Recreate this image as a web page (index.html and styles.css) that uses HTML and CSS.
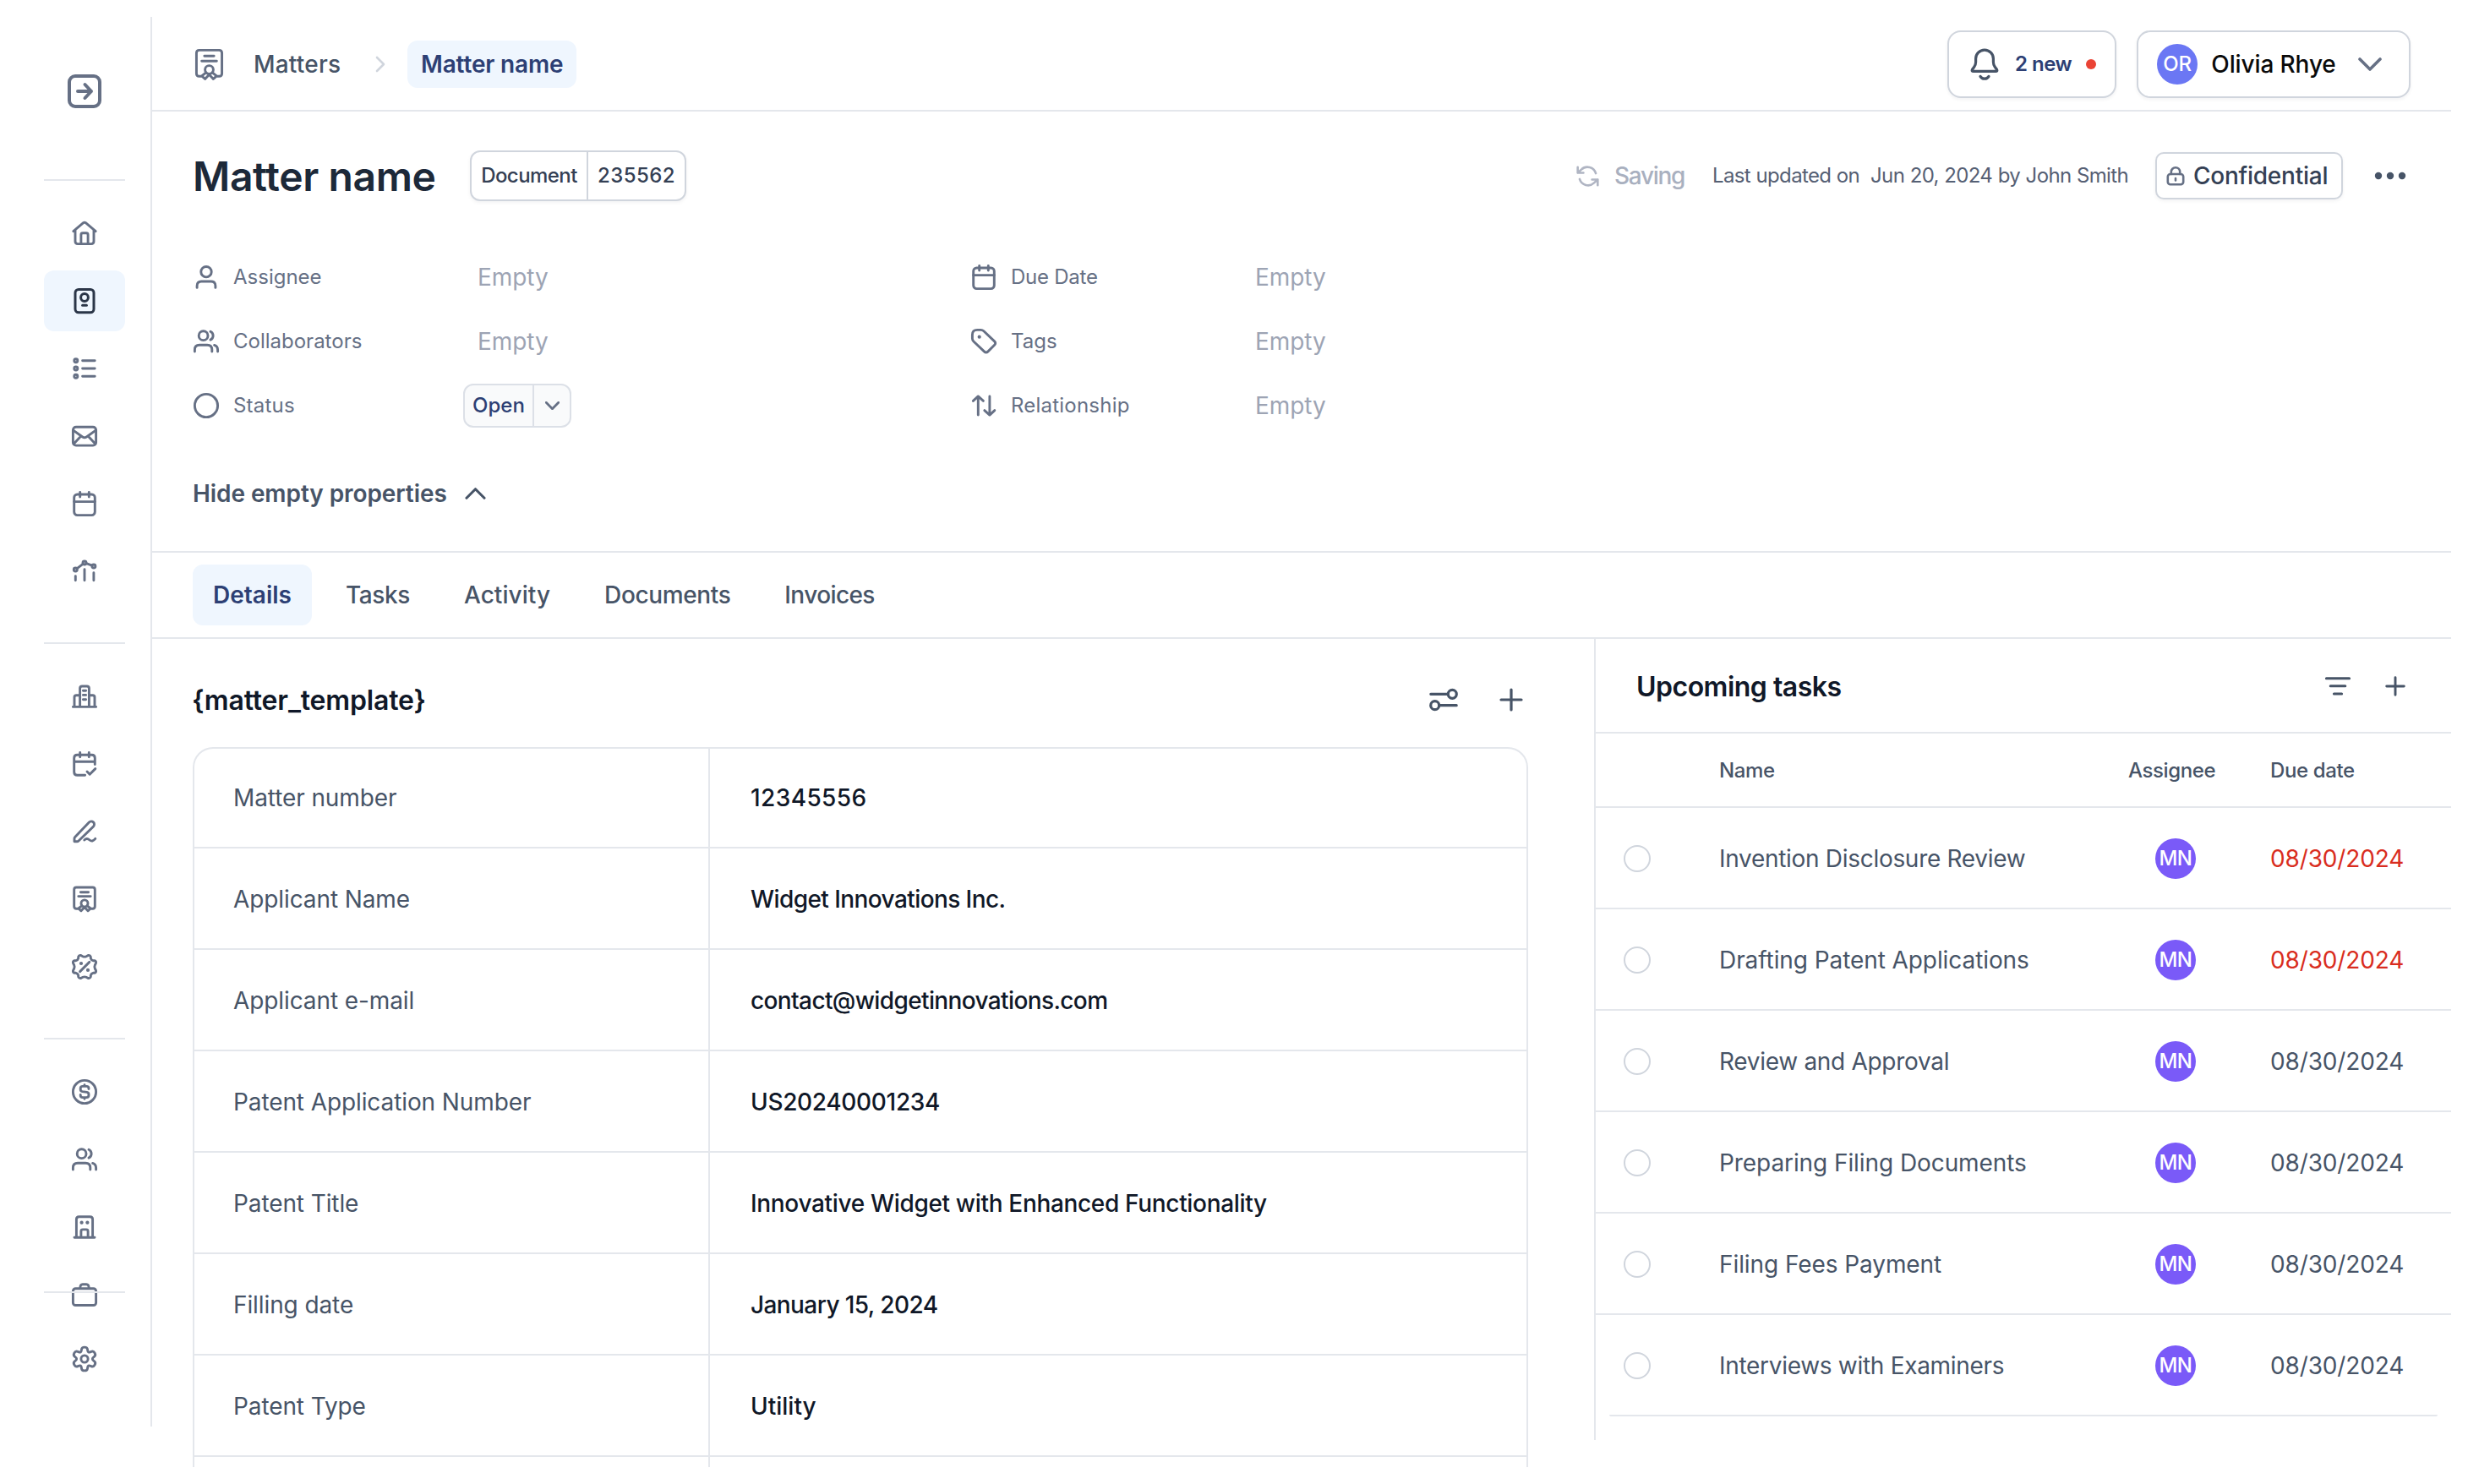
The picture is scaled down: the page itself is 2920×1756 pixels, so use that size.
FILE: index.html
```html
<!DOCTYPE html>
<html lang="en">
<head>
<meta charset="utf-8">
<title>Matter name</title>
<link rel="stylesheet" href="styles.css">
</head>
<body>
<svg class="sprite" aria-hidden="true">
  <symbol id="i-login" viewBox="0 0 40 40"><rect x="2" y="2" width="36" height="36" rx="7"/><path d="M12 20H28M20.5 12L28 20L20.5 28"/></symbol>
  <symbol id="i-home" viewBox="0 0 40 40"><path d="M6.8 17.6L18.6 7.7Q20 6.6 21.4 7.7L33.2 17.6M9 16V29.6Q9 32.6 12 32.6H28Q31 32.6 31 29.6V16M15.9 32V21.7Q15.9 19.7 17.9 19.7H22.1Q24.1 19.7 24.1 21.7V32"/></symbol>
  <symbol id="i-matter" viewBox="0 0 40 40"><rect x="9" y="6.4" width="22" height="27.4" rx="4"/><circle cx="20" cy="16" r="4.4"/><path d="M17.6 25.3H22.4"/></symbol>
  <symbol id="i-list" viewBox="0 0 40 40"><circle cx="9.8" cy="10.8" r="2"/><circle cx="9.8" cy="20" r="2"/><circle cx="9.8" cy="29.2" r="2"/><path d="M17.6 10.8H32.2M17.6 20H32.2M17.6 29.2H32.2"/></symbol>
  <symbol id="i-mail" viewBox="0 0 40 40"><rect x="6.4" y="9.3" width="27.2" height="21.8" rx="3.6"/><path d="M7 13.3L17.6 21Q20 22.7 22.4 21L33 13.3M7.4 29L15.6 20.2M32.6 29L24.4 20.2"/></symbol>
  <symbol id="i-calendar" viewBox="0 0 40 40"><rect x="7.7" y="9" width="24.6" height="24.6" rx="3.8"/><path d="M7.7 17.6H32.3M14.7 6.4V12M25.3 6.4V12"/></symbol>
  <symbol id="i-chart" viewBox="0 0 40 40"><circle cx="9.3" cy="18" r="2"/><circle cx="20" cy="10" r="2"/><circle cx="30.9" cy="14" r="2"/><path d="M11.2 16.6L18.1 11.4M22.1 10.7L28.8 13.2M9.3 25.6V30.8M20 17.8V30.8M30.9 21.8V30.8"/></symbol>
  <symbol id="i-building" viewBox="0 0 40 40"><path d="M6.4 32.4H33.6M14.6 32.4V10.6Q14.6 8 17.2 8H22.8Q25.4 8 25.4 10.6V32.4M14 18.8H10.3Q8 18.8 8 21.1V32.4M26 18.8H29.7Q32 18.8 32 21.1V32.4M18.4 13.2H21.6M18.4 18.4H21.6M18.4 23.7H21.6"/></symbol>
  <symbol id="i-calcheck" viewBox="0 0 40 40"><path d="M20.6 33.3H11.5Q7.7 33.3 7.7 29.5V13.1Q7.7 9.3 11.5 9.3H28.5Q32.3 9.3 32.3 13.1V20.6M7.7 17.3H32.3M14.7 6.4V11.8M25.3 6.4V11.8M23 29L26.2 32.2L32.8 25.6"/></symbol>
  <symbol id="i-pen" viewBox="0 0 40 40"><path d="M8 31.8V28.2Q8 27.2 8.7 26.5L25.4 8.9A3.5 3.5 0 0 1 30.5 13.9L13 31Q12.2 31.8 11.2 31.8ZM19.8 30Q22.8 27.2 26 30T32.8 28.4"/></symbol>
  <symbol id="i-cert" viewBox="0 0 40 40"><path d="M12.6 31.2H10.4Q7.7 31.2 7.7 28.5V8.7Q7.7 6 10.4 6H29.6Q32.3 6 32.3 8.7V28.5Q32.3 31.2 29.6 31.2H27.4M15.4 11.7H24.6M12.8 16.6H27.2M17 27.6L12.8 31L16 33.8L20 29.6L24 33.8L27.2 31L23 27.6"/><circle cx="20" cy="24.9" r="4"/></symbol>
  <symbol id="i-percent" viewBox="-20 -20 40 40"><path d="M12.3 2Q12.9 3.2 13.5 4.3Q14 6.6 11.9 7.3L10.1 7.3Q7.9 7.9 7.3 10.1L7.3 11.9Q6.6 14 4.3 13.5L2 12.3Q0 11.4-2 12.3L-4.3 13.5Q-6.6 14-7.3 11.9L-7.3 10.1Q-7.9 7.9-10.1 7.3L-11.9 7.3Q-14 6.6-13.5 4.3L-12.3 2Q-11.4 0-12.3-2L-13.5-4.3Q-14-6.6-11.9-7.3L-10.1-7.3Q-7.9-7.9-7.3-10.1L-7.3-11.9Q-6.6-14-4.3-13.5L-2-12.3Q0-11.4 2-12.3L4.3-13.5Q6.6-14 7.3-11.9L7.3-10.1Q7.9-7.9 10.1-7.3L11.9-7.3Q14-6.6 13.5-4.3L12.3-2Q11.4 0 12.3 2ZM-5.4 5.6L5.8-5.6"/><circle class="fill" cx="-4" cy="-4" r="2.1"/><circle class="fill" cx="4" cy="3.9" r="2.1"/></symbol>
  <symbol id="i-dollar" viewBox="0 0 40 40"><circle cx="20" cy="20" r="13.6"/><path d="M25 16.6V16Q25 13.4 22.4 13.4H17.8Q15.2 13.4 15.2 16V17Q15.2 19.2 17.4 19.6L22.8 20.4Q25 20.8 25 23V24Q25 26.6 22.4 26.6H17.8Q15.2 26.6 15.2 24V23.4M20 11.8V13M20 27V28.2"/></symbol>
  <symbol id="i-users" viewBox="0 0 40 40"><circle cx="16.6" cy="13.2" r="5.4"/><path d="M25 8.3A5.4 5.4 0 0 1 25 18.1M6.4 32V29.8Q6.4 24.2 12 24.2H21.2Q26.8 24.2 26.8 29.8V32M29.6 24.4Q33.6 25.6 33.6 30V32"/></symbol>
  <symbol id="i-office" viewBox="0 0 40 40"><path d="M8 32.2H32M10.4 32.2V10.8Q10.4 7.7 13.5 7.7H26.5Q29.6 7.7 29.6 10.8V32.2M15.9 32V24.9Q15.9 22.9 17.9 22.9H22.1Q24.1 22.9 24.1 24.9V32"/><circle class="fill" cx="16.6" cy="14.7" r="2.1"/><circle class="fill" cx="23.4" cy="14.7" r="2.1"/></symbol>
  <symbol id="i-briefcase" viewBox="0 0 40 40"><rect x="6.4" y="12.7" width="27.2" height="19.8" rx="3"/><path d="M14.8 12.4Q14.8 7.8 17.8 7.8H22.2Q25.2 7.8 25.2 12.4"/></symbol>
  <symbol id="i-gear" viewBox="-20 -20 40 40"><path d="M10.8 2.1L11.4 2.6Q13.7 4.2 12.1 7Q10.5 9.8 7.9 8.6L7.2 8.3Q4 6.9 3.6 10.4L3.5 11.3Q3.2 13.9 0 13.9Q-3.2 13.9-3.5 11.3L-3.6 10.4Q-4 6.9-7.2 8.3L-7.9 8.6Q-10.5 9.8-12.1 7Q-13.7 4.2-11.4 2.6L-10.8 2.1Q-8 0-10.8-2.1L-11.4-2.6Q-13.7-4.2-12.1-7Q-10.5-9.8-7.9-8.6L-7.2-8.3Q-4-6.9-3.6-10.4L-3.5-11.3Q-3.2-13.9 0-13.9Q3.2-13.9 3.5-11.3L3.6-10.4Q4-6.9 7.2-8.3L7.9-8.6Q10.5-9.8 12.1-7Q13.7-4.2 11.4-2.6L10.8-2.1Q8 0 10.8 2.1Z"/><circle r="4.1"/></symbol>
  <symbol id="i-user" viewBox="0 0 40 40"><circle cx="20" cy="13.7" r="6.2"/><path d="M9.1 32.4V30.2Q9.1 25 14.3 25H25.7Q30.9 25 30.9 30.2V32.4"/></symbol>
  <symbol id="i-circle" viewBox="0 0 40 40"><circle cx="20" cy="20" r="13.6"/></symbol>
  <symbol id="i-tag" viewBox="0 0 40 40"><path d="M6.4 12.2Q6.4 6.4 12.2 6.4H16.4Q18.4 6.4 19.9 7.8L32.6 19.9Q34.8 22.1 32.6 24.3L25 31.9Q22.7 34.2 20.4 31.9L7.9 20Q6.4 18.6 6.4 16.6Z"/><circle class="fill" cx="14.7" cy="14.7" r="2.1"/></symbol>
  <symbol id="i-updown" viewBox="0 0 40 40"><path d="M13.3 31V9.4M7.4 14.4L13.3 8.9L19.4 14.4M26.9 9V30.6M20.8 25.6L26.9 31.1L32.8 25.6"/></symbol>
  <symbol id="i-bell" viewBox="0 0 40 40"><path d="M20 3.1A10.4 10.4 0 0 1 30.4 13.5V17.5Q30.4 20.6 32.3 23.2L34.5 26.2Q35.6 28.4 33.2 28.4H6.8Q4.4 28.4 5.5 26.2L7.7 23.2Q9.6 20.6 9.6 17.5V13.5A10.4 10.4 0 0 1 20 3.1ZM15 34.4Q16.6 37.2 20 37.2T25 34.4"/></symbol>
  <symbol id="i-refresh" viewBox="0 0 24 24"><path d="M1.5 2.5V8.5H7.5M22.5 21.5V15.5H16.5M20.5 9A9.2 9.2 0 0 0 5.3 5L1.5 8.5M22.5 15.5L18.7 19A9.2 9.2 0 0 1 3.5 15"/></symbol>
  <symbol id="i-lock" viewBox="0 0 24 24"><rect x="2.8" y="10" width="18.4" height="12.2" rx="3"/><path d="M6.8 10V7.4A5.2 5.2 0 0 1 17.2 7.4V10M12 15V17.4"/></symbol>
  <symbol id="i-sliders" viewBox="0 0 40 40"><circle cx="30.3" cy="13.3" r="5"/><circle cx="9.7" cy="26.7" r="5"/><path d="M4.8 13.3H25M15 26.7H35.2"/></symbol>
  <symbol id="i-filter" viewBox="0 0 40 40"><path d="M6.4 10.7H33.6M11.2 19.8H28.8M15.4 29H24.6"/></symbol>
  <symbol id="i-plus" viewBox="0 0 28 28"><path d="M14 2V26M2 14H26"/></symbol>
  <symbol id="i-down" viewBox="0 0 28 16"><path d="M2 2L14 14L26 2"/></symbol>
  <symbol id="i-up" viewBox="0 0 28 16"><path d="M2 14L14 2L26 14"/></symbol>
  <symbol id="i-right" viewBox="0 0 12 20"><path d="M2 2L10 10L2 18"/></symbol>
  <symbol id="i-dots" viewBox="0 0 38 10"><circle class="fill" cx="5" cy="5" r="4.2"/><circle class="fill" cx="19" cy="5" r="4.2"/><circle class="fill" cx="33" cy="5" r="4.2"/></symbol>
</svg>

<div class="app">
  <nav class="sidebar">
    <a class="toggle"><svg class="icon"><use href="#i-login"/></svg></a>
    <hr class="rule">
    <div class="group">
      <a class="item"><svg class="icon"><use href="#i-home"/></svg></a>
      <a class="item active"><svg class="icon"><use href="#i-matter"/></svg></a>
      <a class="item"><svg class="icon"><use href="#i-list"/></svg></a>
      <a class="item"><svg class="icon"><use href="#i-mail"/></svg></a>
      <a class="item"><svg class="icon"><use href="#i-calendar"/></svg></a>
      <a class="item"><svg class="icon"><use href="#i-chart"/></svg></a>
    </div>
    <hr class="rule">
    <div class="group">
      <a class="item"><svg class="icon"><use href="#i-building"/></svg></a>
      <a class="item"><svg class="icon"><use href="#i-calcheck"/></svg></a>
      <a class="item"><svg class="icon"><use href="#i-pen"/></svg></a>
      <a class="item"><svg class="icon"><use href="#i-cert"/></svg></a>
      <a class="item"><svg class="icon"><use href="#i-percent"/></svg></a>
    </div>
    <hr class="rule">
    <div class="group">
      <a class="item"><svg class="icon"><use href="#i-dollar"/></svg></a>
      <a class="item"><svg class="icon"><use href="#i-users"/></svg></a>
      <a class="item"><svg class="icon"><use href="#i-office"/></svg></a>
      <a class="item"><svg class="icon"><use href="#i-briefcase"/></svg></a>
    </div>
    <div class="settings">
      <hr class="rule">
      <a class="item"><svg class="icon"><use href="#i-gear"/></svg></a>
    </div>
  </nav>

  <main class="main">
    <header class="topbar">
      <div class="crumbs">
        <svg class="icon crumb-icon"><use href="#i-cert"/></svg>
        <span class="crumb">Matters</span>
        <svg class="icon crumb-sep"><use href="#i-right"/></svg>
        <span class="crumb current">Matter name</span>
      </div>
      <div class="top-actions">
        <button class="btn notify"><svg class="icon bell"><use href="#i-bell"/></svg><span class="count">2 new</span><i class="dot"></i></button>
        <button class="btn account"><span class="avatar blue">OR</span><span class="who">Olivia Rhye</span><svg class="icon caret"><use href="#i-down"/></svg></button>
      </div>
    </header>

    <section class="summary">
      <div class="title-row">
        <h1>Matter name</h1>
        <div class="chip doc"><span class="doc-kind">Document</span><span class="doc-id">235562</span></div>
        <div class="meta">
          <svg class="icon refresh"><use href="#i-refresh"/></svg>
          <span class="saving">Saving</span>
          <span class="updated">Last updated on  Jun 20, 2024 by John Smith</span>
          <span class="chip lock"><svg class="icon lock-icon"><use href="#i-lock"/></svg><span class="conf">Confidential</span></span>
          <svg class="icon dots"><use href="#i-dots"/></svg>
        </div>
      </div>
      <div class="props">
        <div class="prop"><svg class="icon"><use href="#i-user"/></svg><span class="key">Assignee</span><span class="empty">Empty</span></div>
        <div class="prop"><svg class="icon"><use href="#i-calendar"/></svg><span class="key tight">Due Date</span><span class="empty">Empty</span></div>
        <div class="prop"><svg class="icon"><use href="#i-users"/></svg><span class="key">Collaborators</span><span class="empty">Empty</span></div>
        <div class="prop"><svg class="icon"><use href="#i-tag"/></svg><span class="key">Tags</span><span class="empty">Empty</span></div>
        <div class="prop"><svg class="icon"><use href="#i-circle"/></svg><span class="key wide">Status</span><span class="status"><span class="state">Open</span><span class="pick"><svg class="icon"><use href="#i-down"/></svg></span></span></div>
        <div class="prop"><svg class="icon"><use href="#i-updown"/></svg><span class="key wide">Relationship</span><span class="empty">Empty</span></div>
      </div>
      <div class="hide"><span>Hide empty properties</span><svg class="icon"><use href="#i-up"/></svg></div>
    </section>

    <div class="tabs">
      <a class="tab active">Details</a><a class="tab">Tasks</a><a class="tab wide">Activity</a><a class="tab">Documents</a><a class="tab invoices">Invoices</a>
    </div>

    <div class="content">
      <section class="details">
        <div class="details-head">
          <h2>{matter_template}</h2>
          <svg class="icon sliders"><use href="#i-sliders"/></svg>
          <svg class="icon plus"><use href="#i-plus"/></svg>
        </div>
        <dl class="card">
          <div class="row"><dt>Matter number</dt><dd class="num">12345556</dd></div>
          <div class="row"><dt>Applicant Name</dt><dd class="tight">Widget Innovations Inc.</dd></div>
          <div class="row"><dt>Applicant e-mail</dt><dd class="mail">contact@widgetinnovations.com</dd></div>
          <div class="row"><dt>Patent Application Number</dt><dd>US20240001234</dd></div>
          <div class="row"><dt>Patent Title</dt><dd>Innovative Widget with Enhanced Functionality</dd></div>
          <div class="row"><dt>Filling date</dt><dd class="tight">January 15, 2024</dd></div>
          <div class="row"><dt>Patent Type</dt><dd class="wide">Utility</dd></div>
          <div class="row"><dt></dt><dd></dd></div>
        </dl>
      </section>

      <aside class="tasks">
        <div class="tasks-head">
          <h2>Upcoming tasks</h2>
          <svg class="icon filter"><use href="#i-filter"/></svg>
          <svg class="icon plus"><use href="#i-plus"/></svg>
        </div>
        <div class="trow thead"><span></span><span>Name</span><span class="th-who">Assignee</span><span class="date">Due date</span></div>
        <div class="trow"><i class="radio"></i><span class="tight">Invention Disclosure Review</span><span class="avatar">MN</span><span class="date late">08/30/2024</span></div>
        <div class="trow"><i class="radio"></i><span>Drafting Patent Applications</span><span class="avatar">MN</span><span class="date late">08/30/2024</span></div>
        <div class="trow"><i class="radio"></i><span class="tight">Review and Approval</span><span class="avatar">MN</span><span class="date">08/30/2024</span></div>
        <div class="trow"><i class="radio"></i><span>Preparing Filing Documents</span><span class="avatar">MN</span><span class="date">08/30/2024</span></div>
        <div class="trow"><i class="radio"></i><span>Filing Fees Payment</span><span class="avatar">MN</span><span class="date">08/30/2024</span></div>
        <div class="trow last"><i class="radio"></i><span class="tight">Interviews with Examiners</span><span class="avatar">MN</span><span class="date">08/30/2024</span></div>
        <hr class="end">
      </aside>
    </div>
  </main>
</div>
</body>
</html>
```
FILE: styles.css
```css
* { box-sizing: border-box; margin: 0; padding: 0; }

:root {
  --line: #e4e7ec;
  --border: #d0d5dd;
  --gray-400: #98a2b3;
  --gray-500: #667085;
  --gray-600: #475467;
  --gray-900: #101828;
  --brand: #2d3f74;
  --tint: #eff6fe;
}

body {
  background: #fff;
  font-family: Inter, "Open Sans", sans-serif;
  font-size: 28px;
  line-height: 40px;
  color: var(--gray-600);
}

.sprite { display: block; width: 0; height: 0; }

.icon {
  display: block;
  flex: none;
  width: 40px;
  height: 40px;
  fill: none;
  stroke: currentColor;
  stroke-width: 2.9px;
  stroke-linecap: round;
  stroke-linejoin: round;
  color: var(--gray-500);
}
.fill { fill: currentColor; stroke: none; }

.app {
  display: flex;
  align-items: flex-start;
  height: 1756px;
  padding: 20px;
  overflow: hidden;
}

/* Sidebar */
.sidebar {
  display: flex;
  flex-direction: column;
  flex: none;
  width: 160px;
  height: 1668px;
  padding: 68px 30px 0 32px;
  border-right: 2px solid var(--line);
}
.toggle { display: flex; justify-content: center; height: 124px; }
.toggle .icon { stroke-width: 4px; }
.rule { flex: none; height: 2px; border: 0; background: var(--line); }
.group { display: flex; flex-direction: column; gap: 8px; padding: 26px 0 48px; }
.item {
  display: flex;
  align-items: center;
  justify-content: center;
  height: 72px;
  border-radius: 12px;
}
.item.active { background: var(--tint); }
.item.active .icon { color: #2b3648; stroke-width: 3px; }
.settings {
  position: relative;
  display: flex;
  flex-direction: column;
  gap: 42px;
  margin-top: -88px;
}

/* Main column */
.main { flex: 1; min-width: 0; height: 1716px; overflow: hidden; }

.topbar {
  display: flex;
  align-items: center;
  justify-content: space-between;
  height: 112px;
  padding: 2px 48px 0 44px;
  border-bottom: 2px solid var(--line);
}
.crumbs { display: flex; align-items: center; }
.crumb-icon { width: 49px; height: 49px; margin-left: -1px; stroke-width: 2.4px; }
.crumb { margin-left: 28px; font-weight: 500; letter-spacing: 0.2px; }
.crumb-sep { width: 12px; height: 20px; margin: 0 26px 0 41px; stroke-width: 2.6px; color: var(--border); }
.crumb.current {
  width: 200px;
  margin: 0;
  line-height: 56px;
  text-align: center;
  border-radius: 12px;
  background: var(--tint);
  color: var(--brand);
  font-weight: 600;
  letter-spacing: -0.17px;
}

.top-actions { display: flex; gap: 24px; }
.btn {
  display: flex;
  align-items: center;
  height: 80px;
  border: 2px solid var(--border);
  border-radius: 16px;
  background: #fff;
  box-shadow: 0 2px 4px rgba(16, 24, 40, 0.05);
  font: inherit;
}
.notify { width: 200px; padding-left: 22px; }
.bell { stroke-width: 3.2px; color: var(--gray-600); }
.count { width: 84px; margin-left: 16px; text-align: left; font-size: 24px; font-weight: 600; letter-spacing: -0.5px; color: var(--brand); }
.dot { width: 12px; height: 12px; border-radius: 50%; background: #ea4335; }
.account { width: 324px; padding-left: 22px; }
.who { width: 148px; margin: 0 26px 0 16px; white-space: nowrap; font-weight: 500; letter-spacing: -0.12px; color: #0a0a0a; }
.caret { width: 28px; height: 16px; stroke-width: 3.6px; }

.avatar {
  display: flex;
  align-items: center;
  justify-content: center;
  width: 48px;
  height: 48px;
  border-radius: 50%;
  background: #7a5af8;
  color: #fff;
  font-size: 24px;
  font-weight: 500;
  letter-spacing: -0.6px;
}
.avatar.blue { background: #6b77f4; letter-spacing: -0.3px; }

/* Matter summary */
.summary {
  height: 522px;
  padding: 46px 48px 0;
  border-bottom: 2px solid var(--line);
}
.title-row { display: flex; align-items: center; height: 60px; }
h1 { width: 328px; padding-top: 2px; font-size: 48px; line-height: 60px; font-weight: 600; letter-spacing: -0.39px; color: #1d2939; white-space: nowrap; }
.chip {
  display: flex;
  border: 2px solid var(--border);
  border-radius: 12px;
  background: #fff;
  box-shadow: 0 2px 4px rgba(16, 24, 40, 0.05);
  font-weight: 500;
  color: #344054;
}
.doc { width: 256px; height: 60px; font-size: 24px; line-height: 56px; text-align: center; }
.doc-kind { width: 136px; letter-spacing: -0.55px; }
.doc-id { flex: 1; border-left: 2px solid var(--border); letter-spacing: 0.4px; }
.meta { display: flex; align-items: center; margin-left: auto; margin-right: 5px; }
.refresh { width: 27px; height: 27px; stroke-width: 2.3px; color: #b0b5c3; }
.saving { width: 116px; margin-left: 18px; font-weight: 500; letter-spacing: -1.3px; color: #a9b0bf; }
.updated { width: 524px; font-size: 24px; letter-spacing: -0.64px; word-spacing: 0.35px; white-space: pre; color: #566074; }
.lock { align-items: center; width: 222px; height: 56px; padding-left: 10px; border-radius: 10px; }
.lock-icon { width: 24px; height: 24px; stroke-width: 2.6px; }
.conf { margin-left: 9px; letter-spacing: -0.25px; }
.dots { width: 38px; height: 10px; margin-left: 37px; color: var(--gray-600); }

.props {
  display: grid;
  grid-template-columns: 920px 920px;
  grid-auto-rows: 52px;
  row-gap: 24px;
  margin: 64px 0 58px;
}
.prop { display: flex; align-items: center; margin-left: -4px; }
.key { width: 288px; margin-left: 12px; font-size: 24px; letter-spacing: 0; color: var(--gray-500); }
.key.tight { letter-spacing: -0.25px; }
.key.wide { letter-spacing: 0.22px; }
.empty { margin-left: 1px; letter-spacing: -0.05px; color: #9da4b4; }
.status {
  display: flex;
  width: 128px;
  height: 52px;
  margin-left: -16px;
  border: 2px solid #dce0e7;
  border-radius: 12px;
  background: #f9fafb;
  font-size: 24px;
  line-height: 48px;
  font-weight: 500;
  color: var(--brand);
}
.state { width: 82px; border-right: 2px solid #dce0e7; text-align: center; }
.pick { display: flex; flex: 1; align-items: center; justify-content: center; }
.pick .icon { width: 17px; height: 10px; stroke-width: 4.6px; }
.hide { display: flex; align-items: center; gap: 21px; height: 40px; font-weight: 600; letter-spacing: -0.08px; }
.hide .icon { width: 25px; height: 14px; stroke-width: 3.6px; color: var(--gray-600); }

/* Tabs */
.tabs {
  display: flex;
  gap: 16px;
  height: 102px;
  padding: 14px 48px;
  border-bottom: 2px solid var(--line);
}
.tab { height: 72px; padding: 0 24px; line-height: 72px; font-weight: 500; letter-spacing: -0.38px; border-radius: 12px; }
.tab.active { background: var(--tint); color: var(--brand); font-weight: 600; letter-spacing: 0; }
.tab.wide { letter-spacing: 0.05px; }
.tab.invoices { letter-spacing: -0.6px; }

/* Details */
.content { display: flex; align-items: flex-start; }
.details { flex: 1; padding: 16px 78px 0 48px; }
.details-head { display: flex; align-items: center; height: 112px; }
h2 { flex: 1; padding-top: 1px; font-size: 32px; font-weight: 600; letter-spacing: -0.16px; color: var(--gray-900); }
.details-head h2 { text-indent: -1px; }
.details-head .icon, .tasks-head .icon { color: var(--gray-600); }
.sliders { stroke-width: 3.2px; }
.details-head .plus { width: 28px; height: 28px; margin: 0 6px 0 46px; stroke-width: 3.2px; }
.card {
  border: 2px solid var(--line);
  border-bottom: 0;
  border-radius: 24px 24px 0 0;
}
.row { display: flex; height: 120px; border-bottom: 2px solid var(--line); line-height: 120px; }
.row:first-child { height: 118px; line-height: 116px; }
dt { width: 608px; padding-left: 46px; letter-spacing: -0.1px; }
dd { flex: 1; padding-left: 48px; border-left: 2px solid var(--line); font-weight: 500; letter-spacing: -0.33px; color: var(--gray-900); }
dd.num { letter-spacing: 0.4px; }
dd.mail { letter-spacing: -0.62px; }
dd.tight { letter-spacing: -0.58px; }
dd.wide { letter-spacing: 0; }

/* Upcoming tasks */
.tasks { flex: none; width: 1014px; height: 948px; border-left: 2px solid var(--line); }
.tasks-head {
  display: flex;
  align-items: center;
  height: 112px;
  padding: 2px 54px 0 48px;
  border-bottom: 2px solid var(--line);
}
.tasks-head h2 { letter-spacing: -0.51px; }
.filter { stroke-width: 3px; }
.tasks-head .plus { width: 24px; height: 24px; margin-left: 36px; stroke-width: 3.4px; }
.trow {
  display: grid;
  grid-template-columns: 146px 516px 108px 1fr;
  align-items: center;
  height: 120px;
  padding-top: 2px;
  border-bottom: 2px solid var(--line);
  letter-spacing: -0.08px;
}
.trow .tight { letter-spacing: -0.3px; }
.trow.last { height: 118px; border-bottom: 0; }
.thead { height: 88px; font-size: 24px; font-weight: 500; letter-spacing: -0.4px; }
.th-who { margin-left: -32px; }
.radio { width: 32px; height: 32px; margin-left: 33px; border: 2px solid var(--border); border-radius: 50%; }
.date { padding-left: 28px; letter-spacing: -0.15px; }
.thead .date { letter-spacing: -0.38px; }
.late { color: #d92d20; }
.end { height: 2px; margin: 0 16px; border: 0; border-radius: 0 0 12px 12px; background: var(--line); }
```
